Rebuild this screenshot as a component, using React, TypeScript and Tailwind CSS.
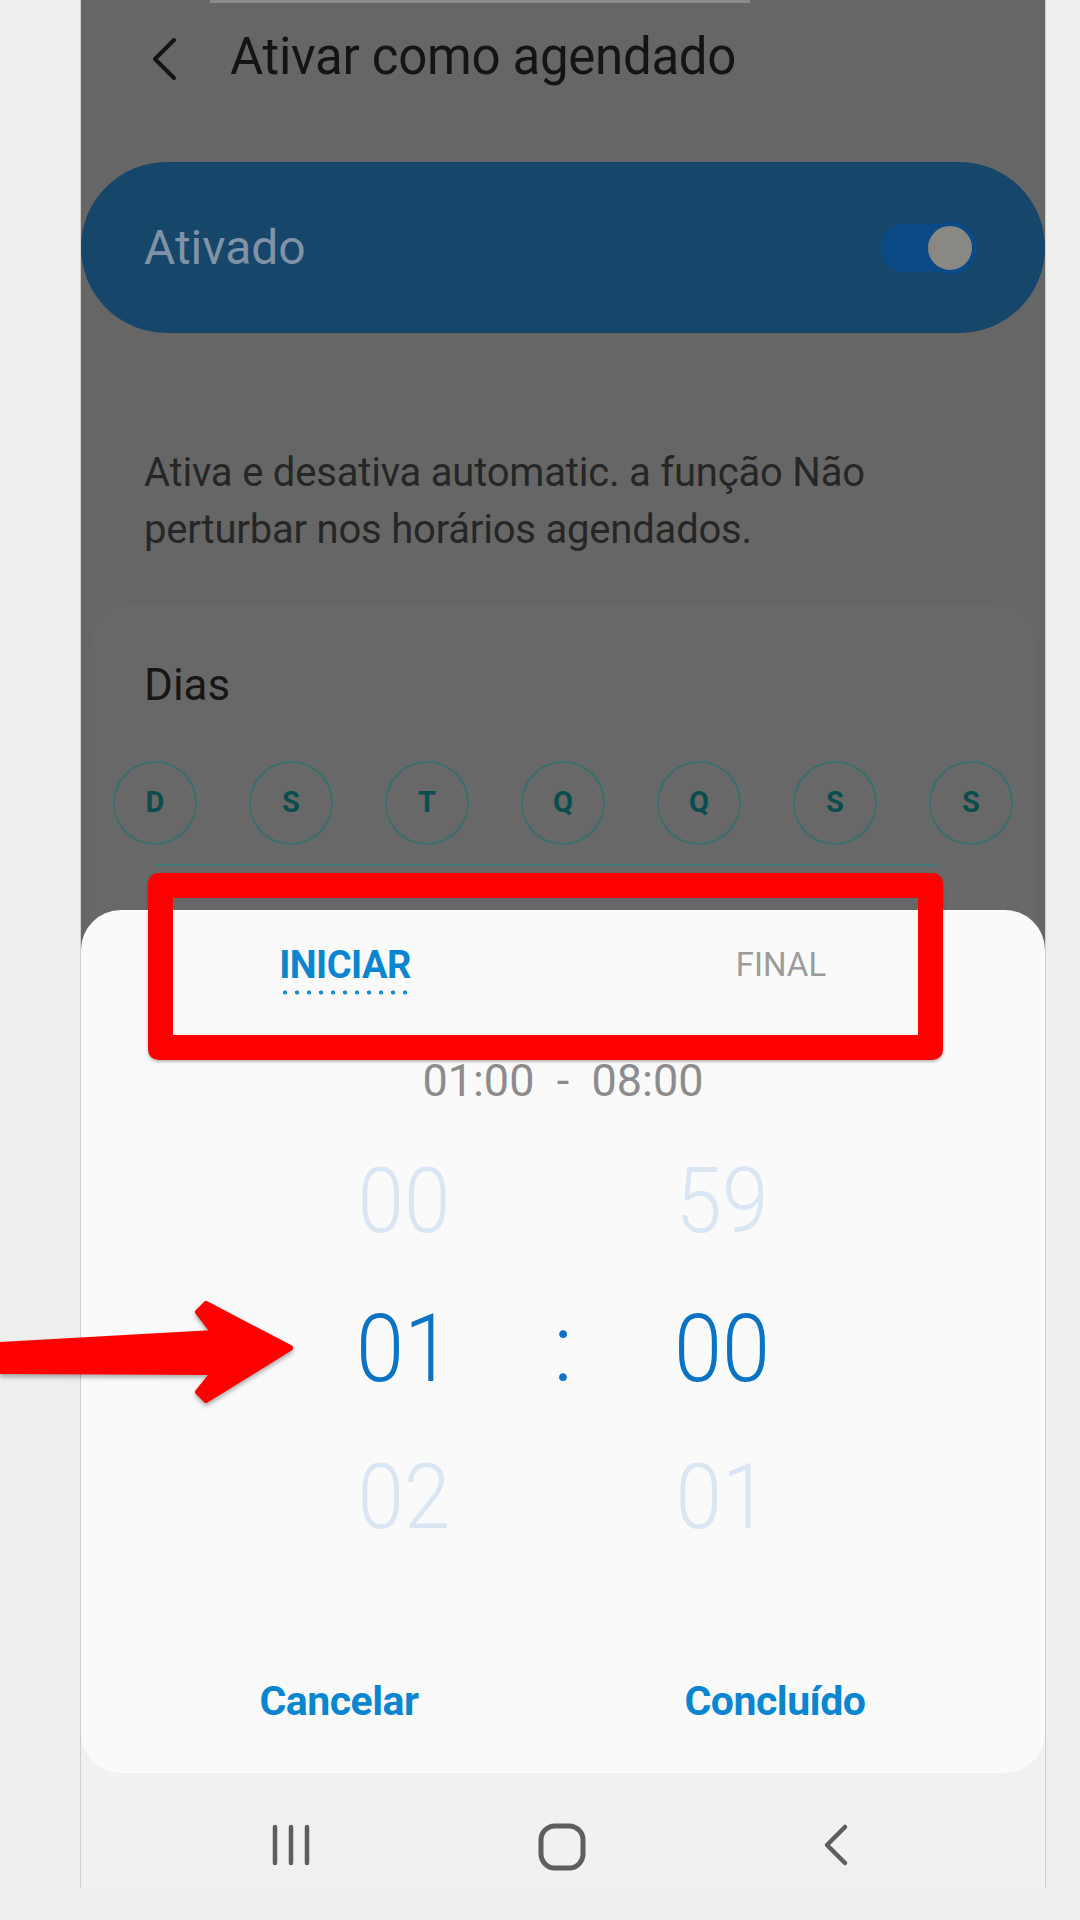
const days = ["D", "S", "T", "Q", "Q", "S", "S"];

const App = () => {
  return (
    <div className="relative w-[1080px] h-[1920px] overflow-hidden bg-[#eeeeec] font-['Roboto',sans-serif]">
      {/* phone */}
      <div className="ml-[80px] w-[966px] h-[1888px] flex flex-col bg-[#f1f1f1] border-x border-[#cfcfcf]">
        {/* dimmed settings page */}
        <div className="h-[960px] flex flex-col bg-[#666666]">
          <div className="h-[4px] flex">
            <div className="ml-[129px] w-[540px] h-[3px] bg-[#8c8c8c]" />
          </div>
          <div className="h-[158px] flex items-start pt-[24px]">
            <svg className="ml-[67px] mt-[8px]" width="32" height="46" viewBox="0 0 32 46">
              <path d="M26 4 L7 23 L26 42" fill="none" stroke="#141414" strokeWidth="4" strokeLinecap="round" strokeLinejoin="round" />
            </svg>
            <span className="ml-[50px] text-[51px] leading-[58px] text-[#141414] tracking-[-0.3px]">Ativar como agendado</span>
          </div>

          <div className="h-[171px] rounded-full bg-[#17466b] flex items-center justify-between pl-[63px] pr-[70px]">
            <span className="text-[48px] text-[#8093a6]">Ativado</span>
            <div className="relative w-[94px] h-[48px] rounded-full bg-[#0b4a86]">
              <div className="absolute right-[-2px] top-[-3px] w-[54px] h-[54px] rounded-full bg-[#8a8884] border-[5px] border-[#0b4a86]" />
            </div>
          </div>

          <p className="mt-[111px] pl-[63px] text-[40px] leading-[57px] text-[#262626] tracking-[-0.2px]">
            Ativa e desativa automatic. a função Não
            <br />
            perturbar nos horários agendados.
          </p>

          <div className="mt-[47px] mx-[9px] flex-1 rounded-t-[44px] bg-[#686868] flex flex-col">
            <span className="mt-[55px] pl-[54px] text-[44px] leading-[50px] text-[#161616]">Dias</span>
            <div className="mt-[51px] pl-[23px] flex gap-[52px]">
              {days.map((d, i) => (
                <div
                  key={i}
                  className="w-[84px] h-[84px] rounded-full border-2 border-[#3b6f6f] flex items-center justify-center text-[29px] font-bold text-[#0b4d4f]"
                >
                  {d}
                </div>
              ))}
            </div>
            <div className="mt-[19px] ml-[65px] w-[782px] h-[2px] bg-[#3d7a78]" />
          </div>
        </div>

        {/* time picker sheet */}
        <div className="relative z-10 -mt-[50px] h-[863px] rounded-[40px] bg-[#fafafa] flex flex-col pt-[35px]">
          <div className="grid grid-cols-2 px-[46px] h-[40px] items-center text-center">
            <span className="text-[38px] leading-[40px] font-bold text-[#0a86d0] tracking-[-0.5px]">INICIAR</span>
            <span className="text-[33px] leading-[40px] text-[#9c9c9c]">FINAL</span>
          </div>
          <div className="grid grid-cols-2 px-[46px] mt-[5px]">
            <div className="mx-auto w-[132px] h-[5px] bg-[radial-gradient(circle,#1a8fd8_1.8px,transparent_2.4px)] bg-[length:12px_5px]" />
          </div>

          <div className="mt-[56px] h-[60px] text-center text-[45px] leading-[60px] text-[#8c8c8c] whitespace-pre">
            {"01:00  -  08:00"}
          </div>

          <div className="mt-[16px] flex flex-col">
            <div className="h-[148px] flex items-center justify-center">
              <span className="w-[200px] text-center text-[90px] font-light text-[#dae6f3] scale-x-[0.93]">00</span>
              <span className="w-[118px]" />
              <span className="w-[200px] text-center text-[90px] font-light text-[#dae6f3] scale-x-[0.93]">59</span>
            </div>
            <div className="h-[148px] flex items-center justify-center">
              <span className="w-[200px] text-center text-[94px] font-light text-[#0b72c4] scale-x-[0.92]">01</span>
              <span className="w-[118px] text-center text-[94px] font-light text-[#0b72c4]">:</span>
              <span className="w-[200px] text-center text-[94px] font-light text-[#0b72c4] scale-x-[0.92]">00</span>
            </div>
            <div className="h-[148px] flex items-center justify-center">
              <span className="w-[200px] text-center text-[90px] font-light text-[#dae6f3] scale-x-[0.93]">02</span>
              <span className="w-[118px]" />
              <span className="w-[200px] text-center text-[90px] font-light text-[#dae6f3] scale-x-[0.93]">01</span>
            </div>
          </div>

          <div className="mt-[100px] h-[60px] grid grid-cols-2 pl-[40px] pr-[52px] items-center text-center">
            <span className="text-[41px] font-bold text-[#0a86d0] tracking-[-0.5px]">Cancelar</span>
            <span className="text-[41px] font-bold text-[#0a86d0] tracking-[-0.5px]">Concluído</span>
          </div>
        </div>

        {/* nav bar */}
        <div className="flex-1 flex items-start pt-[50px] pl-[180px] gap-[211px]">
          <svg width="60" height="44" viewBox="0 0 60 44">
            <g stroke="#5e5e5e" strokeWidth="4.5" strokeLinecap="round">
              <line x1="14" y1="4" x2="14" y2="40" />
              <line x1="30" y1="4" x2="30" y2="40" />
              <line x1="46" y1="4" x2="46" y2="40" />
            </g>
          </svg>
          <svg width="60" height="48" viewBox="0 0 60 48">
            <rect x="9" y="3" width="42" height="42" rx="14" fill="none" stroke="#5e5e5e" strokeWidth="5" />
          </svg>
          <svg width="60" height="44" viewBox="0 0 60 44">
            <path d="M42 4 L24 22 L42 40" fill="none" stroke="#5e5e5e" strokeWidth="4.5" strokeLinecap="round" strokeLinejoin="round" />
          </svg>
        </div>
      </div>

      {/* annotation: red box */}
      <div className="absolute left-[148px] top-[873px] w-[795px] h-[187px] border-[25px] border-[#ff0000] rounded-[10px] shadow-[0_2px_3px_rgba(0,0,0,0.25)] z-20" />

      {/* annotation: red arrow */}
      <svg
        className="absolute left-0 top-[1290px] z-20 drop-shadow-[0_3px_2px_rgba(0,0,0,0.3)]"
        width="310"
        height="130"
        viewBox="0 0 310 130"
      >
        <path
          d="M0 55 L214 43 L198 22 L206 14 L290 58 L206 110 L198 102 L214 82 L0 81 Z"
          fill="#ff0000"
          stroke="#ff0000"
          strokeWidth="6"
          strokeLinejoin="round"
        />
      </svg>
    </div>
  );
};

export default App;
